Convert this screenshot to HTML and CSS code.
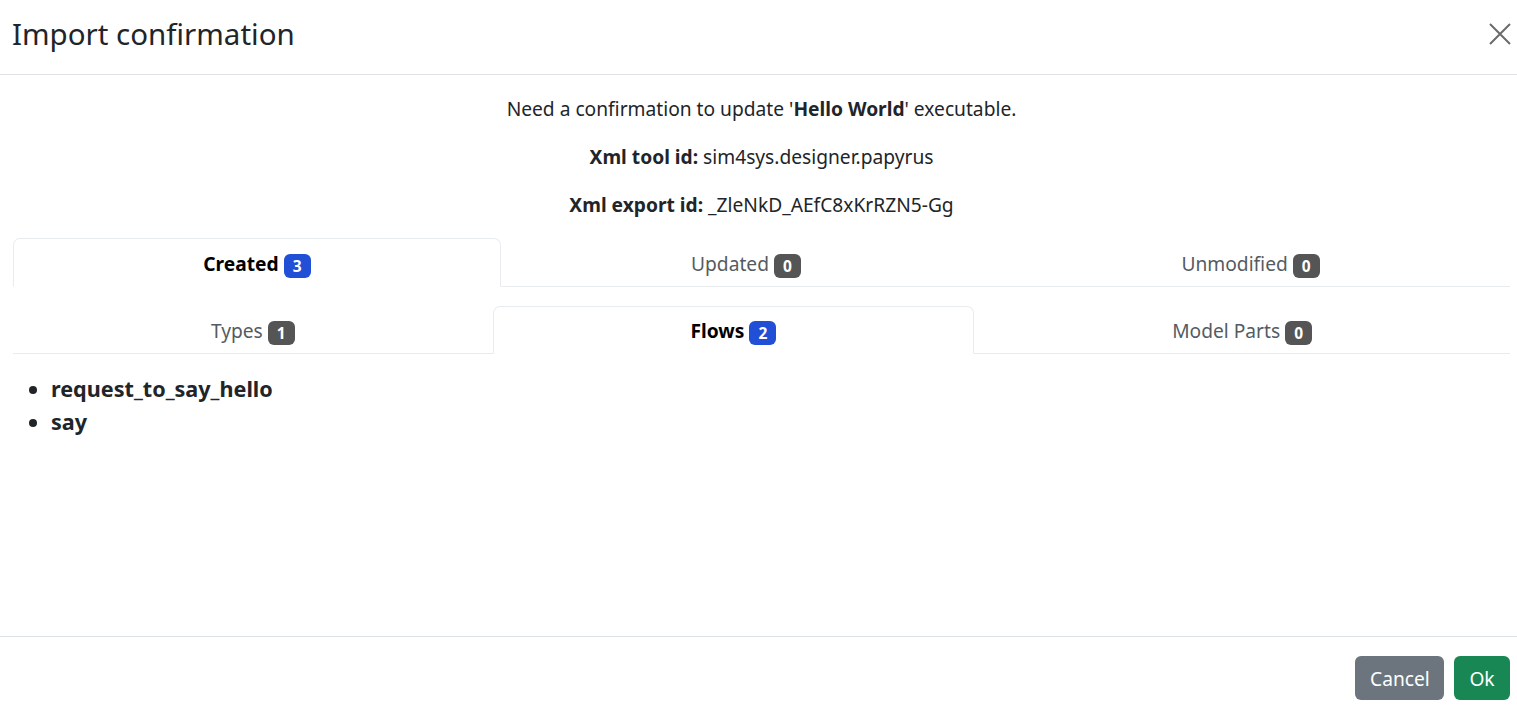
FILE: index.html
```html
<!DOCTYPE html>
<html lang="en">
<head>
<meta charset="utf-8">
<title>Import confirmation</title>
<link rel="stylesheet" href="styles.css">
</head>
<body>
<div class="modal">
  <div class="modal-header">
    <h5 class="modal-title">Import confirmation</h5>
    <button class="btn-close" aria-label="Close">
      <svg width="22" height="22" viewBox="0 0 22 22"><path d="M1 1L21 21M21 1L1 21" stroke="#6b6b6b" stroke-width="2" fill="none"/></svg>
    </button>
  </div>
  <div class="modal-body">
    <p class="info">Need a confirmation to update '<b>Hello World</b>' executable.</p>
    <p class="info"><b>Xml tool id:</b> sim4sys.designer.papyrus</p>
    <p class="info"><b>Xml export id:</b> _ZleNkD_AEfC8xKrRZN5-Gg</p>
    <ul class="nav-tabs">
      <li class="nav-item active">Created <span class="badge primary">3</span></li>
      <li class="nav-item">Updated <span class="badge dark">0</span></li>
      <li class="nav-item">Unmodified <span class="badge dark">0</span></li>
    </ul>
    <ul class="nav-tabs sub">
      <li class="nav-item">Types <span class="badge dark">1</span></li>
      <li class="nav-item active">Flows <span class="badge primary">2</span></li>
      <li class="nav-item">Model Parts <span class="badge dark">0</span></li>
    </ul>
    <ul class="items">
      <li>request_to_say_hello</li>
      <li>say</li>
    </ul>
  </div>
  <div class="modal-footer">
    <button class="btn secondary">Cancel</button>
    <button class="btn success">Ok</button>
  </div>
</div>
</body>
</html>
```
FILE: styles.css
```css
* { box-sizing: border-box; }
html, body { margin: 0; padding: 0; }
body {
  font-family: "Noto Sans", "Open Sans", sans-serif;
  font-size: 19.2px;
  color: #212529;
  background: #fff;
}
.modal {
  height: 708px;
  display: flex;
  flex-direction: column;
}
.modal-header {
  height: 75px;
  display: flex;
  align-items: center;
  justify-content: space-between;
  padding: 0 7px 6px 12px;
  border-bottom: 1px solid #dee2e6;
}
.modal-title {
  margin: 0;
  font-size: 29.5px;
  font-weight: 400;
  line-height: 1.2;
}
.btn-close {
  border: 0;
  background: transparent;
  padding: 0;
  width: 22px;
  height: 22px;
  margin-right: -1px;
  margin-top: 0;
  display: flex;
}
.modal-body {
  flex: 1;
  padding: 19px 7px 0 13px;
}
.info {
  margin: 0 0 18px;
  text-align: center;
  line-height: 30px;
}
.info b { font-weight: 700; }
.nav-tabs {
  list-style: none;
  margin: 0;
  padding: 0;
  display: flex;
  border-bottom: 1px solid #e9ecef;
}
.nav-tabs + .nav-tabs { margin-top: 19px; }
.nav-tabs:first-of-type { margin-top: 15px; }
.nav-item {
  flex: 1 1 auto;
  text-align: center;
  height: 49px;
  line-height: 49px;
  color: #545b62;
  border: 1px solid transparent;
  border-radius: 7px 7px 0 0;
  margin-bottom: -1px;
  white-space: nowrap;
}
.nav-tabs.sub .nav-item { height: 48px; line-height: 48px; }
.nav-item.active {
  color: #000;
  font-weight: 700;
  background: #fff;
  border-color: #e9ecef #e9ecef #fff;
}
.badge {
  display: inline-block;
  min-width: 27px;
  height: 24px;
  line-height: 24px;
  padding: 0 8px;
  border-radius: 6px;
  font-size: 15.5px;
  font-weight: 700;
  color: #fff;
  vertical-align: -1px;
  text-align: center;
}
.badge.primary { background: #2150d6; }
.badge.dark { background: #555; }
.items {
  margin: 18px 0 0;
  padding-left: 38px;
  font-weight: 700;
  font-size: 21.6px;
  line-height: 33px;
}
.modal-footer {
  height: 72px;
  border-top: 1px solid #dee2e6;
  display: flex;
  justify-content: flex-end;
  align-items: flex-start;
  gap: 10px;
  padding: 19px 7px 0 13px;
}
.btn {
  font-family: inherit;
  font-size: 19.2px;
  height: 44px;
  border: 0;
  border-radius: 6px;
  color: #fff;
  padding: 0 15px;
}
.btn.secondary { background: #6c757d; width: 89px; }
.btn.success { background: #198754; width: 56px; }
```
